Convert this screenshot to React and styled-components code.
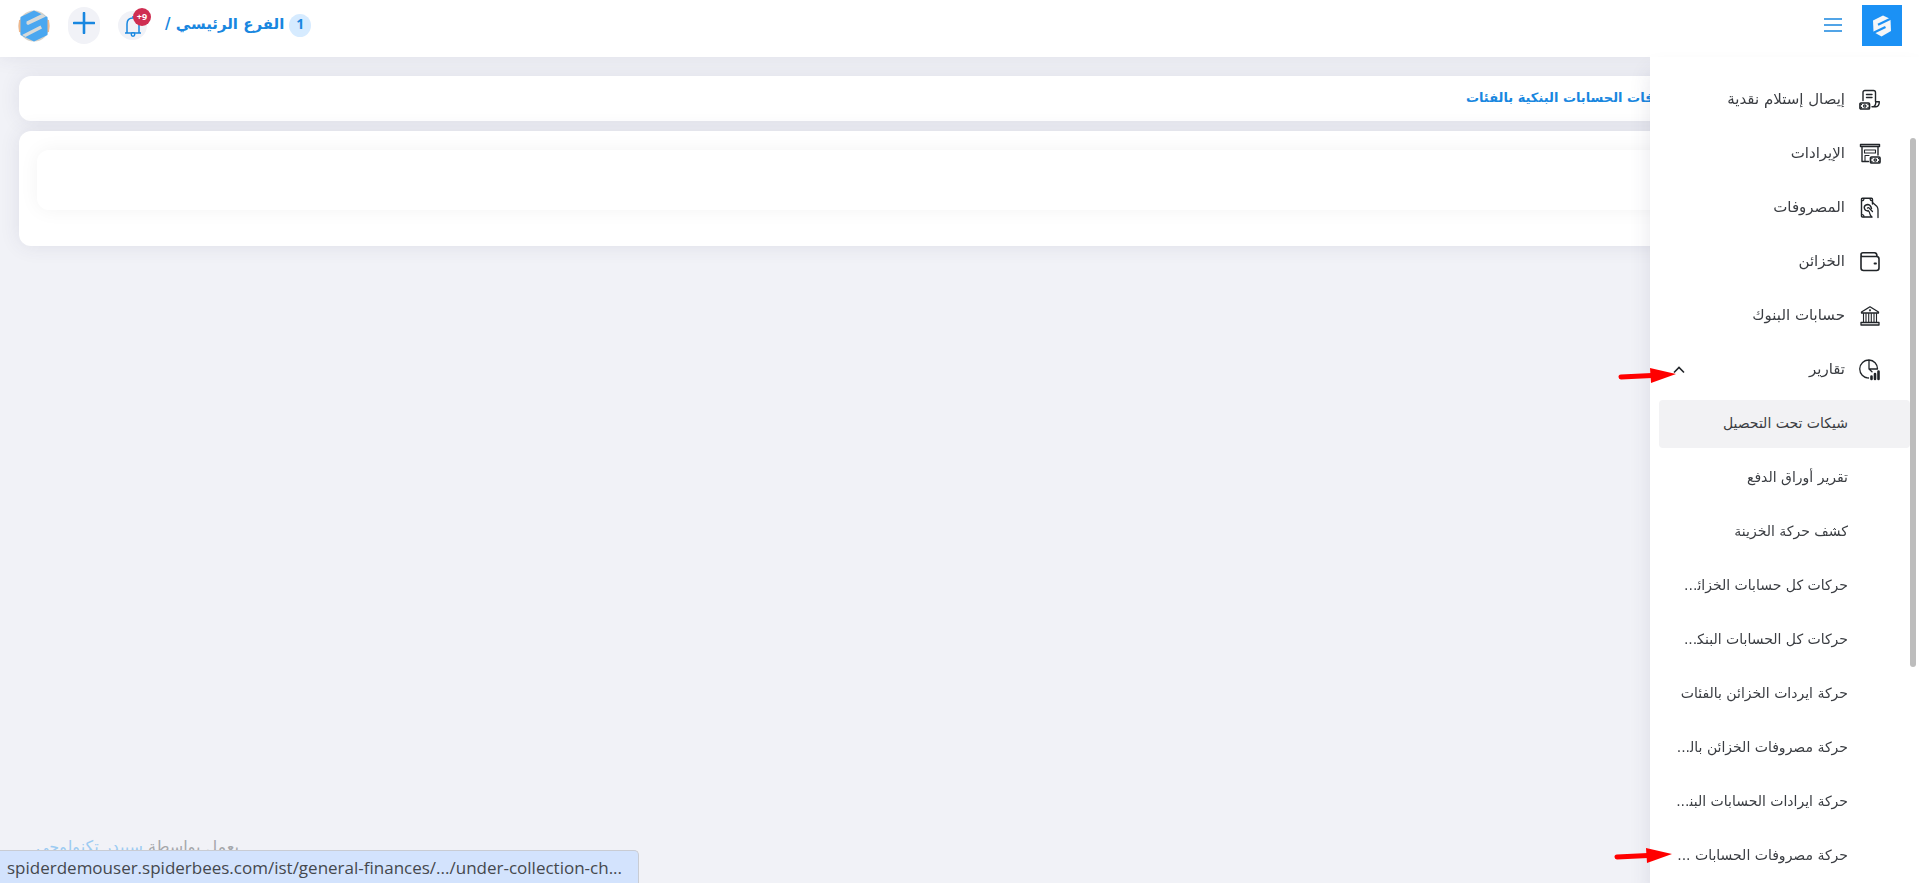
import React from 'react'
import styled, { createGlobalStyle, css } from 'styled-components'

const colors = {
  primary: '#1987e0',
  text: '#212529',
  label: '#3a3d42',
  page: '#f1f2f7',
  soft: '#f2f2f4',
  badge: '#cf2e52',
  mark: '#ff0000',
}

const GlobalStyle = createGlobalStyle`
  * {
    box-sizing: border-box;
  }

  body {
    margin: 0;
    background: ${colors.page};
    color: ${colors.text};
    font-family: 'DejaVu Sans', sans-serif;
    font-size: 14px;
    overflow: hidden;
  }

  button {
    font: inherit;
    color: inherit;
    border: 0;
    padding: 0;
    background: none;
    cursor: pointer;
  }

  a {
    color: inherit;
    text-decoration: none;
  }
`

const Page = styled.div`
  direction: rtl;
  min-height: 100vh;
  display: flex;
  flex-direction: column;
`

const Header = styled.header`
  display: flex;
  align-items: center;
  justify-content: space-between;
  height: 57px;
  padding: 0 17px 6px 18px;
  background: #fff;
  box-shadow: 0 0 20px rgba(60, 60, 100, 0.1);
`

const HeaderGroup = styled.div`
  display: flex;
  align-items: center;
  gap: ${props => props.gap}px;
`

const BrandLink = styled.a`
  display: flex;
  align-items: center;
  justify-content: center;
  width: 40px;
  height: 41px;
  background: #1b91f5;
`

const MenuButton = styled.button`
  display: flex;
  padding-bottom: 2px;
`

const Branch = styled.div`
  display: flex;
  align-items: center;
  gap: 5px;
  color: ${colors.primary};
  font-size: 15px;
  font-weight: 700;
`

const BranchName = styled.span`
  padding-bottom: 4px;
`

const BranchCount = styled.span`
  width: 22px;
  height: 23px;
  border-radius: 50%;
  background: #d6ebff;
  font-family: 'Noto Sans', sans-serif;
  font-size: 14px;
  line-height: 20px;
  text-align: center;
`

const RoundButton = styled.button`
  position: relative;
  display: flex;
  align-items: center;
  justify-content: center;
  width: ${props => props.width}px;
  height: ${props => props.height}px;
  padding-bottom: ${props => props.$lift || 0}px;
  border-radius: 16px;
  background: ${colors.page};
`

const Badge = styled.span`
  position: absolute;
  top: -3px;
  right: -4px;
  width: 18px;
  height: 18px;
  border-radius: 50%;
  background: ${colors.badge};
  color: #fff;
  direction: ltr;
  font-family: 'Noto Sans', sans-serif;
  font-size: 9px;
  font-weight: 700;
  line-height: 17px;
  text-align: center;
`

const Main = styled.main`
  display: flex;
  flex: 1;
  flex-direction: column;
  gap: 10px;
  padding: 19px 19px 0;
`

const Card = styled.section`
  border-radius: 12px;
  background: #fff;
  box-shadow: 0 0 20px rgba(60, 60, 100, 0.1);
`

const TitleCard = styled(Card)`
  padding: 11px 172px 13px 12px;
`

const Title = styled.h1`
  margin: 0;
  color: ${colors.primary};
  font-size: 13px;
  font-weight: 700;
  line-height: 21px;
`

const ContentCard = styled(Card)`
  padding: 19px 18px 36px;
`

const FilterPanel = styled.div`
  height: 60px;
  border-radius: 12px;
  background: #fff;
  box-shadow: 0 0 20px rgba(0, 0, 0, 0.05);
`

const Footer = styled.footer`
  padding: 0 36px 24px;
  color: #a5a7ab;
  font-size: 16px;
  line-height: 24px;
  text-align: left;

  a {
    color: #9ccbf2;
  }
`

const Sidebar = styled.aside`
  position: fixed;
  top: 57px;
  right: 0;
  bottom: 0;
  width: 269px;
  padding: 19px 9px 0;
  background: #fff;
  box-shadow: 0 14px 20px rgba(60, 60, 100, 0.12);
`

const ScrollThumb = styled.div`
  position: absolute;
  top: 81px;
  right: 3px;
  width: 6px;
  height: 64%;
  border-radius: 3px;
  background: #bdbdbd;
`

const Menu = styled.ul`
  display: flex;
  flex-direction: column;
  gap: 6px;
  margin: 0;
  padding: 0;
  list-style: none;
`

const MenuItem = styled.li`
  position: relative;
`

const row = css`
  display: flex;
  align-items: center;
  width: 100%;
  height: 48px;
  border-radius: 4px;
  white-space: nowrap;
`

const MenuRow = styled.a`
  ${row}
  gap: 14px;
  padding: 0 29px 0 14px;
  font-size: 15px;
`

const SubRow = styled.a`
  ${row}
  padding: 0 62px 0 9px;
  background: ${props => (props.$active ? colors.soft : 'transparent')};
`

const RowLabel = styled.span`
  flex: 1;
  padding-bottom: 3px;
  color: ${colors.label};
  text-align: right;
`

const Arrow = styled.svg`
  position: absolute;
  top: ${props => props.$top}px;
  left: ${props => props.$left}px;
  pointer-events: none;
`

const StatusBar = styled.div`
  position: fixed;
  left: 0;
  bottom: 0;
  height: 33px;
  padding: 0 16px 0 7px;
  border-top: 1px solid #c9ccd3;
  border-right: 1px solid #c9ccd3;
  border-top-right-radius: 5px;
  background: #d3e3fd;
  color: #45484d;
  direction: ltr;
  font-family: 'Open Sans', sans-serif;
  font-size: 17px;
  line-height: 33px;
`

const Icon = ({ children, size = 22 }) => (
  <svg
    width={size}
    height={size}
    viewBox="0 0 22 22"
    fill="none"
    stroke="currentColor"
    strokeWidth="1.4"
    strokeLinecap="round"
    strokeLinejoin="round"
    aria-hidden="true"
  >
    {children}
  </svg>
)

const Banknote = ({ x, y }) => (
  <g transform={`translate(${x} ${y})`}>
    <rect x="0" y="0" width="9.5" height="6" rx="1" fill="#fff" strokeWidth="1.7" />
    <circle cx="4.75" cy="3" r="1.2" strokeWidth="1.2" />
    <path d="M1.4 1.4v.2M8.1 1.4v.2M1.4 4.5v.2M8.1 4.5v.2" />
  </g>
)

const ReceiptIcon = () => (
  <Icon>
    <path d="M4 11.500V3.500Q4 1.500 6 1.500H14.500Q16.500 1.500 16.500 3.500V12.500" />
    <path d="M7.500 5.500H13M7.500 8.500H13" />
    <path d="M13 17.800H17Q20.300 17.500 20.300 12.800H16.800Q16.800 17.300 14 17.800" />
    <Banknote x={1} y={14} />
  </Icon>
)

const IncomeIcon = () => (
  <Icon>
    <path d="M1.500 1.500H20.500V3.500H1.500ZM3 3.500V18.500H9.500M19 3.500V12" />
    <path d="M5.500 7H16.500V10H5.500ZM6 18V12.500H10" strokeWidth="1.1" />
    <Banknote x={11.5} y={14} />
  </Icon>
)

const ExpenseIcon = () => (
  <Icon>
    <path d="M12.500 20H3.500Q2.500 20 2.500 19V2.500Q2.500 1.200 3.500 1.200H12.500Q13.500 1.200 13.500 2.500V7" />
    <path d="M5 1.500Q5 3.800 2.800 3.800M11 1.500Q11 3.800 13.300 3.800M5 19.800Q5 17.500 2.800 17.500" strokeWidth="1.100" />
    <path d="M12.500 11.500Q11.500 7.500 8.500 7.500Q5 8 5.300 11Q5.800 14 9 14" />
    <path d="M8.500 11Q9.500 10.200 10.300 11.200L13.500 14.500M13.500 5.500 18 9.500Q19 11 19 13V20.500" strokeWidth="1.300" />
    <path d="M9 13.500Q10.500 14.500 10.800 16.500Q11 18.500 13 20" strokeWidth="1.300" />
  </Icon>
)

const WalletIcon = () => (
  <Icon>
    <path strokeWidth="1.6" d="M2 4.500V17Q2 19.500 4.500 19.500H17.500Q20 19.500 20 17V8Q20 5.500 17.500 5.500H3.500Q2 5.500 2 3.800Q2 1.800 4 1.800H15.500Q18 1.800 18 5.300" />
    <path d="M15.500 12.500H17" strokeWidth="1.800" />
  </Icon>
)

const BankIcon = () => (
  <Icon>
    <path d="M2.500 7 11 1.800 19.500 7V8H2.500ZM2 17.500H20V20H2Z" strokeWidth="1.300" />
    <path d="M4.500 8.500V17M7 8.500V17M9.700 8.500V17M12.300 8.500V17M15 8.500V17M17.500 8.500V17" strokeWidth="1.100" />
    <circle cx="11" cy="5.300" r=".4" />
  </Icon>
)

const ReportIcon = () => (
  <Icon>
    <path d="M10 1A9 9 0 0 0 9.500 19M10 1V10H18.500A8.800 8.800 0 0 0 10 1M10 10 13 12.800" strokeWidth="1.300" />
    <path d="M12.500 17.500V20M16 15V20M19.500 12.500V20" strokeWidth="2.600" />
  </Icon>
)

const BrandLogo = () => (
  <svg width="20" height="22" viewBox="0 0 20 22" aria-hidden="true">
    <path fill="#f4f6f8" d="M1 5.500 11 .5 18.500 4 19 16 9.500 21.500 1.500 17Z" />
    <path d="M6 9.800 20 3M0 18.500 13.500 12" stroke="#1b91f5" strokeWidth="2.200" />
  </svg>
)

const UserLogo = () => (
  <svg width="32" height="32" viewBox="0 0 32 32" aria-hidden="true">
    <circle cx="16" cy="16" r="15.500" fill="#d8d2c8" />
    <path d="M1 10Q0 16 1 22L3 22V10ZM31 10Q32 16 31 22L29 22V10Z" fill="#f0b88c" />
    <path d="M16 .5 29.500 7V25L16 31.500 2.500 25V7Z" fill="#4aa7f0" />
    <path d="M8.500 11.500 24 4 28 6.500 10 15 8.500 14ZM4 25 22.500 15.500 24 18.500 7.500 27Z" fill="#d8dad8" />
  </svg>
)

const mainItems = [
  { label: 'إيصال إستلام نقدية', icon: ReceiptIcon },
  { label: 'الإيرادات', icon: IncomeIcon },
  { label: 'المصروفات', icon: ExpenseIcon },
  { label: 'الخزائن', icon: WalletIcon },
  { label: 'حسابات البنوك', icon: BankIcon },
  { label: 'تقارير', icon: ReportIcon, open: true, mark: { top: 18, left: -43 } },
]

const reportItems = [
  { label: 'شيكات تحت التحصيل', active: true },
  { label: 'تقرير أوراق الدفع' },
  { label: 'كشف حركة الخزينة' },
  { label: 'حركات كل حسابات الخزائ\u200d...' },
  { label: 'حركات كل الحسابات البنك\u200d...' },
  { label: 'حركة ايردات الخزائن بالفئات' },
  { label: 'حركة مصروفات الخزائن بال\u200d...' },
  { label: 'حركة ايرادات الحسابات البن\u200d...' },
  { label: 'حركة مصروفات الحسابات ...', mark: { top: 12, left: -47 } },
]

const MarkArrow = ({ top, left }) => (
  <Arrow $top={top} $left={left} width="60" height="24" viewBox="0 0 60 24" aria-hidden="true">
    <path d="M5 13 36 11.500" stroke={colors.mark} strokeWidth="5" strokeLinecap="round" />
    <path d="M34 4 60 10 35 19Z" fill={colors.mark} />
  </Arrow>
)

const Chevron = () => (
  <svg width="12" height="8" viewBox="0 0 12 8" fill="none" stroke="currentColor" strokeWidth="1.600" aria-hidden="true">
    <path d="M1 6.500 6 1.500 11 6.500" />
  </svg>
)

const App = () => (
  <Page>
    <GlobalStyle />
    <Header>
      <HeaderGroup gap={20}>
        <BrandLink href="#" aria-label="سبيدر">
          <BrandLogo />
        </BrandLink>
        <MenuButton type="button" aria-label="القائمة">
          <svg width="18" height="14" viewBox="0 0 18 14" stroke={colors.primary} strokeWidth="1.500" aria-hidden="true">
            <path d="M0 1H18M0 7H18M0 13H18" />
          </svg>
        </MenuButton>
      </HeaderGroup>
      <HeaderGroup gap={18}>
        <Branch>
          <BranchCount>1</BranchCount>
          <BranchName>الفرع الرئيسي /</BranchName>
        </Branch>
        <RoundButton type="button" width={29} height={29} aria-label="الإشعارات">
          <svg width="18" height="22" viewBox="0 0 18 22" fill="none" stroke={colors.primary} strokeWidth="1.500" aria-hidden="true">
            <path d="M1 18H17M3 18V9Q3 3 9 3Q15 3 15 9V18M9 3V1" />
            <circle cx="9" cy="19.500" r="1.700" fill="#fff" />
          </svg>
          <Badge>+9</Badge>
        </RoundButton>
        <RoundButton type="button" width={32} height={37} $lift={5} aria-label="إضافة">
          <svg width="22" height="22" viewBox="0 0 22 22" stroke={colors.primary} strokeWidth="2.600" strokeLinecap="round" aria-hidden="true">
            <path d="M11 1V21M1 11H21" />
          </svg>
        </RoundButton>
        <UserLogo />
      </HeaderGroup>
    </Header>

    <Main>
      <TitleCard>
        <Title>حركة مصروفات الحسابات البنكية بالفئات</Title>
      </TitleCard>
      <ContentCard>
        <FilterPanel />
      </ContentCard>
    </Main>

    <Footer>
      يعمل بواسطة <a href="#">سبيدر تكنولوجي</a>
    </Footer>

    <Sidebar>
      <Menu>
        {mainItems.map(({ label, icon: ItemIcon, open, mark }) => (
          <MenuItem key={label}>
            <MenuRow href="#">
              <ItemIcon />
              <RowLabel>{label}</RowLabel>
              {open && <Chevron />}
            </MenuRow>
            {mark && <MarkArrow {...mark} />}
          </MenuItem>
        ))}
        {reportItems.map(({ label, active, mark }) => (
          <MenuItem key={label}>
            <SubRow href="#" $active={active}>
              <RowLabel>{label}</RowLabel>
            </SubRow>
            {mark && <MarkArrow {...mark} />}
          </MenuItem>
        ))}
      </Menu>
      <ScrollThumb />
    </Sidebar>

    <StatusBar>spiderdemouser.spiderbees.com/ist/general-finances/.../under-collection-ch...</StatusBar>
  </Page>
)

export default App
